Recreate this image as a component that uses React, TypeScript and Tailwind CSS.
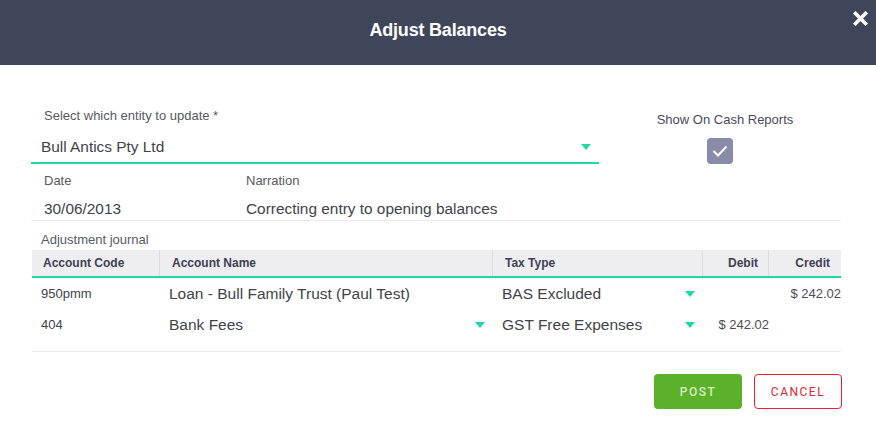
import React from "react";

const Arrow = () => (
  <svg width="10" height="6" viewBox="0 0 10 6" className="shrink-0">
    <polygon points="0,0 10,0 5,6" fill="#1ed8a9" />
  </svg>
);

export default function App() {
  const font = { fontFamily: '"Liberation Sans", Arial, sans-serif' };
  return (
    <div className="w-[876px] h-[444px] bg-white flex flex-col" style={font}>
      <div className="relative h-[65px] bg-[#404659] flex items-center justify-center shrink-0">
        <span className="text-white font-bold text-[18px] tracking-[-0.2px] -mt-[4px]">Adjust Balances</span>
        <svg className="absolute right-[8px] top-[11px]" width="15" height="15" viewBox="0 0 15 15">
          <path d="M2.5 2.5 L12.5 12.5 M12.5 2.5 L2.5 12.5" stroke="white" strokeWidth="3.6" strokeLinecap="square" />
        </svg>
      </div>

      <div className="flex flex-col pl-[31px] pr-[35px]">
        <div className="flex pt-[44px]">
          <div className="w-[568px] flex flex-col">
            <div className="pl-[13px] text-[13px] leading-[14px] text-[#555a63]">Select which entity to update *</div>
            <div className="mt-[14px] flex items-center justify-between pl-[10px] pr-[8px] pb-[5px] border-b-2 border-[#1ed8a9]">
              <span className="text-[15.4px] leading-[20px] text-[#40434a]">Bull Antics Pty Ltd</span>
              <Arrow />
            </div>
          </div>
          <div className="flex-1 flex flex-col items-center mt-[3px]">
            <div className="text-[13px] leading-[16px] text-[#474b5a] pl-[10px]">Show On Cash Reports</div>
            <div className="mt-[10px] w-[26px] h-[26px] rounded-[4px] bg-[#8a8aa9] flex items-center justify-center">
              <svg width="16" height="12" viewBox="0 0 16 12">
                <path d="M1.5 6 L6 10.5 L14.5 1.5" stroke="white" strokeWidth="2" fill="none" />
              </svg>
            </div>
          </div>
        </div>

        <div className="flex pt-[10px] pb-[1px] border-b border-[#ececee]">
          <div className="w-[215px] pl-[13px] flex flex-col">
            <div className="text-[13px] leading-[14px] text-[#555a63]">Date</div>
            <div className="mt-[11px] text-[15.4px] leading-[20px] text-[#40434a]">30/06/2013</div>
          </div>
          <div className="flex flex-col">
            <div className="text-[13px] leading-[14px] text-[#555a63]">Narration</div>
            <div className="mt-[11px] text-[15.4px] leading-[20px] text-[#40434a]">Correcting entry to opening balances</div>
          </div>
        </div>

        <div className="mt-[12px] pl-[10px] text-[13px] leading-[14px] text-[#555a63]">Adjustment journal</div>

        <div className="mt-[3px] ml-[1px] w-[809px] flex flex-col pb-[11px] border-b border-[#ececee]">
          <div className="flex h-[28px] bg-[#eeeef0] border-b-2 border-[#1ed8a9] text-[12px] font-bold text-[#3d4152]">
            <div className="w-[128px] pl-[11px] flex items-center border-r border-[#dcdce0]">Account Code</div>
            <div className="w-[333px] pl-[12px] flex items-center border-r border-[#dcdce0]">Account Name</div>
            <div className="w-[210px] pl-[12px] flex items-center border-r border-[#dcdce0]">Tax Type</div>
            <div className="w-[66px] pr-[10px] flex items-center justify-end border-r border-[#dcdce0]">Debit</div>
            <div className="flex-1 pr-[11px] flex items-center justify-end">Credit</div>
          </div>
          {[
            { code: "950pmm", name: "Loan - Bull Family Trust (Paul Test)", nameArrow: false, tax: "BAS Excluded", debit: "", credit: "$ 242.02" },
            { code: "404", name: "Bank Fees", nameArrow: true, tax: "GST Free Expenses", debit: "$ 242.02", credit: "" },
          ].map((r) => (
            <div key={r.code} className="flex h-[31px] items-center text-[#40434a]">
              <div className="w-[128px] pl-[9px] text-[13px]">{r.code}</div>
              <div className="w-[333px] pl-[9px] pr-[8px] flex items-center justify-between text-[15.5px]">
                <span>{r.name}</span>
                {r.nameArrow && <Arrow />}
              </div>
              <div className="w-[210px] pl-[9px] pr-[8px] flex items-center justify-between text-[15.5px]">
                <span>{r.tax}</span>
                <Arrow />
              </div>
              <div className="w-[66px] text-right text-[13px] text-[#4a4d55] whitespace-nowrap">{r.debit}</div>
              <div className="flex-1 text-right text-[13px] text-[#4a4d55] whitespace-nowrap">{r.credit}</div>
            </div>
          ))}
        </div>

        <div className="mt-[22px] flex justify-end gap-[12px] -mr-[1px]" style={{ fontFamily: 'Roboto, "Liberation Sans", sans-serif' }}>
          <button className="w-[88px] h-[35px] rounded-[4px] bg-[#5bb22a] text-[#d6efc4] text-[12px] tracking-[1.5px] font-medium">POST</button>
          <button className="w-[88px] h-[35px] rounded-[4px] border border-[#e8232f] bg-white text-[#e8232f] text-[12px] tracking-[1.5px]">CANCEL</button>
        </div>
      </div>
    </div>
  );
}
